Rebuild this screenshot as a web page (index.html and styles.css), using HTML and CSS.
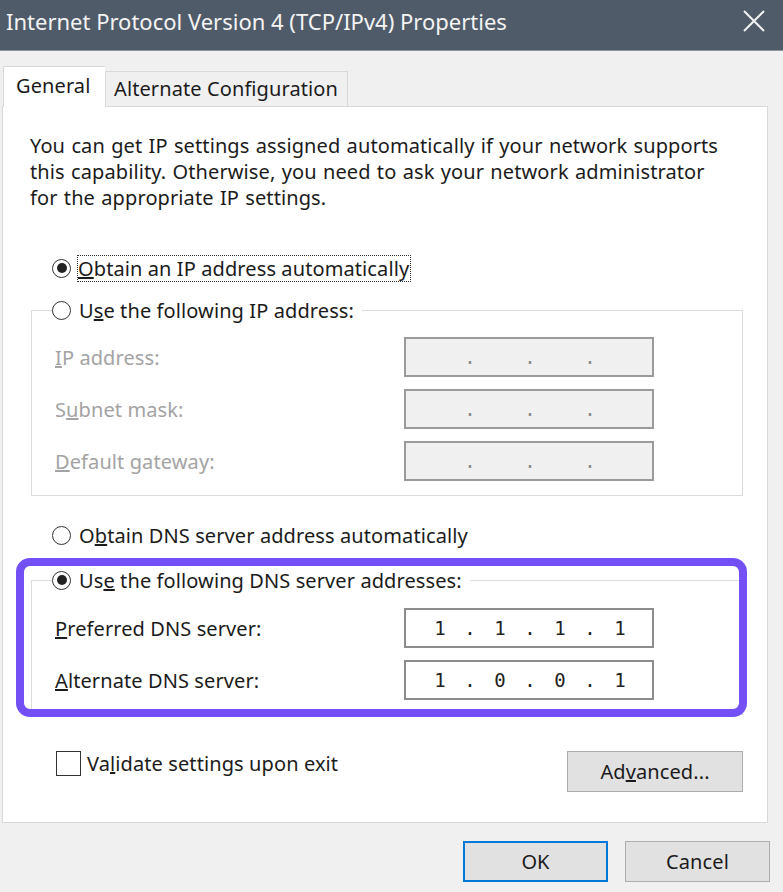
FILE: index.html
```html
<!DOCTYPE html>
<html>
<head>
<meta charset="utf-8">
<link rel="stylesheet" href="styles.css">
</head>
<body>
<div class="window">
  <div class="titlebar">
    <span class="title">Internet Protocol Version 4 (TCP/IPv4) Properties</span>
    <svg class="close" width="24" height="24" viewBox="0 0 24 24"><path d="M2 2 L22 22 M22 2 L2 22" stroke="#f2f2f2" stroke-width="2" fill="none"/></svg>
  </div>
  <div class="tabs">
    <div class="tab active">General</div>
    <div class="tab">Alternate Configuration</div>
  </div>
  <div class="panel">
    <p class="desc">You can get IP settings assigned automatically if your network supports this capability. Otherwise, you need to ask your network administrator for the appropriate IP settings.</p>

    <div class="opt first"><span class="radio checked"></span><span class="focus"><u>O</u>btain an IP address automatically</span></div>

    <fieldset class="group">
      <legend class="opt"><span class="radio"></span><span class="lbl">U<u>s</u>e the following IP address:</span></legend>
      <div class="row disabled"><span class="label"><u>I</u>P address:</span><span class="ipbox off"><span class="oct"></span><span class="dot">.</span><span class="oct"></span><span class="dot">.</span><span class="oct"></span><span class="dot">.</span><span class="oct"></span></span></div>
      <div class="row disabled"><span class="label">S<u>u</u>bnet mask:</span><span class="ipbox off"><span class="oct"></span><span class="dot">.</span><span class="oct"></span><span class="dot">.</span><span class="oct"></span><span class="dot">.</span><span class="oct"></span></span></div>
      <div class="row disabled"><span class="label"><u>D</u>efault gateway:</span><span class="ipbox off"><span class="oct"></span><span class="dot">.</span><span class="oct"></span><span class="dot">.</span><span class="oct"></span><span class="dot">.</span><span class="oct"></span></span></div>
    </fieldset>

    <div class="opt dns-auto"><span class="radio"></span><span class="lbl">O<u>b</u>tain DNS server address automatically</span></div>

    <fieldset class="group dns">
      <legend class="opt"><span class="radio checked"></span><span class="lbl">Us<u>e</u> the following DNS server addresses:</span></legend>
      <div class="row"><span class="label"><u>P</u>referred DNS server:</span><span class="ipbox"><span class="oct">1</span><span class="dot">.</span><span class="oct">1</span><span class="dot">.</span><span class="oct">1</span><span class="dot">.</span><span class="oct">1</span></span></div>
      <div class="row"><span class="label"><u>A</u>lternate DNS server:</span><span class="ipbox"><span class="oct">1</span><span class="dot">.</span><span class="oct">0</span><span class="dot">.</span><span class="oct">0</span><span class="dot">.</span><span class="oct">1</span></span></div>
    </fieldset>

    <div class="highlight"></div>

    <div class="bottom">
      <div class="check"><span class="box"></span><span>Va<u>l</u>idate settings upon exit</span></div>
      <div class="btn adv">Ad<u>v</u>anced...</div>
    </div>
  </div>
  <div class="actions">
    <div class="btn ok">OK</div>
    <div class="btn">Cancel</div>
  </div>
</div>
</body>
</html>
```

FILE: styles.css
```css
html, body {
  margin: 0;
  padding: 0;
}
body {
  background: #f0f0f0;
  font-family: "Noto Sans", "Open Sans", sans-serif;
  color: #1b1b1b;
  font-size: 20px;
  letter-spacing: 0.1px;
}
.window {
  width: 783px;
  height: 892px;
  overflow: hidden;
}
.titlebar {
  height: 51px;
  background: #4f5b69;
  display: flex;
  align-items: center;
  justify-content: space-between;
  padding: 0 17px 0 6px;
  box-sizing: border-box;
  border-bottom: 1px solid #8c949d;
}
.title {
  color: #f4f4f4;
  font-size: 22px;
  letter-spacing: 0;
  margin-top: -8px;
}
.close {
  margin-top: -8px;
}
.tabs {
  display: flex;
  align-items: flex-end;
  margin-top: 15px;
  padding-left: 3px;
  height: 40px;
}
.tab {
  box-sizing: border-box;
  height: 35px;
  border: 1px solid #d9d9d9;
  border-bottom: none;
  background: #f0f0f0;
  padding: 0 0 0 8px;
  width: 243px;
  line-height: 34px;
}
.tab.active {
  height: 41px;
  width: 102px;
  background: #fff;
  padding-left: 12px;
  line-height: 38px;
  margin-bottom: -1px;
  position: relative;
  z-index: 1;
  border-right: none;
}
.panel {
  position: relative;
  margin-left: 2px;
  width: 766px;
  height: 717px;
  box-sizing: border-box;
  background: #fff;
  border: 1px solid #d9d9d9;
}
.desc {
  margin: 26px 0 0 27px;
  width: 700px;
  line-height: 26px;
  word-spacing: 1px;
}
.opt {
  display: flex;
  align-items: center;
  height: 26px;
}
.opt.first {
  margin: 44px 0 0 49px;
}
.radio {
  width: 19px;
  height: 19px;
  box-sizing: border-box;
  border: 1.5px solid #333;
  border-radius: 50%;
  background: #fff;
  margin-right: 8px;
  display: flex;
  align-items: center;
  justify-content: center;
  flex: none;
}
.radio.checked::after {
  content: "";
  width: 10px;
  height: 10px;
  border-radius: 50%;
  background: #222;
}
.focus {
  border: 1px dotted #333;
  padding: 0 1px 0 0;
  line-height: 25px;
  margin-left: -2px;
}
.group {
  margin: 16px 0 0 28px;
  width: 712px;
  box-sizing: border-box;
  border: 1px solid #dcdcdc;
  padding: 14px 0 14px 20px;
}
.group legend {
  padding: 0 8px 0 0;
  margin-left: 0;
}
.row {
  display: flex;
  align-items: center;
  height: 40px;
  padding-left: 3px;
  margin-top: 12px;
}
.group legend + .row {
  margin-top: 0;
}
.row.disabled .label {
  color: #a3a3a3;
}
.label {
  width: 349px;
}
.ipbox {
  width: 250px;
  height: 40px;
  box-sizing: border-box;
  border: 2px solid #8c8c8c;
  background: #fff;
  display: flex;
  align-items: center;
  padding-left: 10px;
  font-family: "DejaVu Sans Mono", monospace;
  font-size: 19px;
  letter-spacing: 0;
  color: #222;
}
.ipbox.off {
  background: #f0f0f0;
  border-color: #9a9a9a;
  color: #8a8a8a;
}
.oct {
  width: 48px;
  text-align: center;
}
.dot {
  width: 12px;
  text-align: center;
}
.opt.dns-auto {
  margin: 26px 0 0 49px;
}
.group.dns {
  margin-top: 19px;
  padding-top: 15px;
}
.highlight {
  position: absolute;
  left: 13px;
  top: 451px;
  width: 731px;
  height: 159px;
  box-sizing: border-box;
  border: 8px solid #7350f6;
  border-radius: 14px;
  pointer-events: none;
}
.bottom {
  display: flex;
  justify-content: space-between;
  align-items: flex-start;
  margin-top: 36px;
  padding: 0 24px 0 53px;
}
.check {
  display: flex;
  align-items: center;
  height: 25px;
}
.box {
  width: 25px;
  height: 25px;
  box-sizing: border-box;
  border: 1.5px solid #333;
  background: #fff;
  margin-right: 6px;
}
.btn {
  width: 145px;
  height: 41px;
  box-sizing: border-box;
  background: #e1e1e1;
  border: 1px solid #adadad;
  display: flex;
  align-items: center;
  justify-content: center;
}
.btn.adv {
  width: 176px;
}
.btn.ok {
  border: 2px solid #0078d7;
}
.actions {
  display: flex;
  justify-content: flex-end;
  gap: 17px;
  margin-top: 18px;
  padding-right: 13px;
}
```
